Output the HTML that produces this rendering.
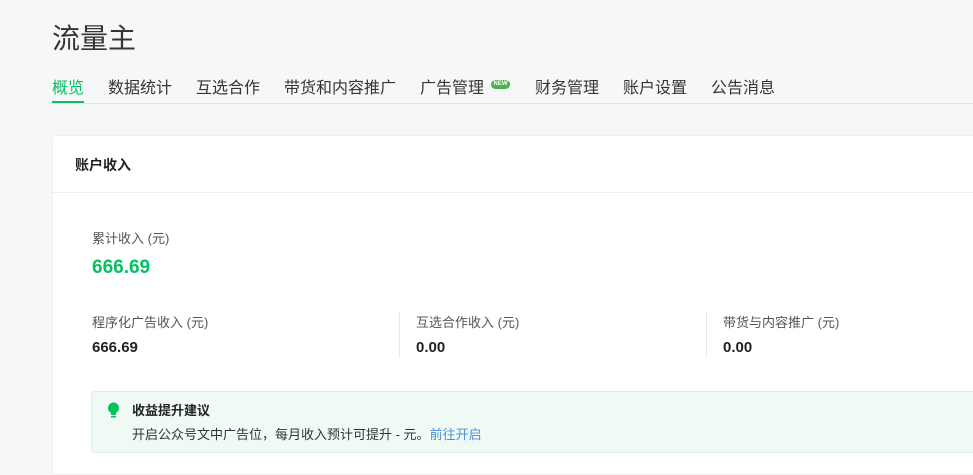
<!DOCTYPE html>
<html><head><meta charset="utf-8"><style>
*{margin:0;padding:0;box-sizing:border-box}
body{width:973px;height:463px;overflow:hidden;background:#f6f7f9;font-family:"Liberation Sans","Noto Sans CJK SC",sans-serif;color:#333;position:relative}
.a{position:absolute;white-space:nowrap}
h1{position:absolute;left:52px;top:17px;font-size:28px;font-weight:normal;color:#353535}
.tab{position:absolute;top:74px;font-size:16px;color:#353535}
.line{position:absolute;left:52px;right:0;top:103px;height:1px;background:#e2e3e5}
.card{position:absolute;left:52px;top:135px;width:930px;height:340px;background:#fff;border:1px solid #eceef0;border-radius:4px}
.lbl{font-size:13px;color:#555}
.val{font-size:15px;font-weight:bold;color:#222}
.div{position:absolute;top:312px;width:1px;height:46px;background:#e8e8e8}
.tip{position:absolute;left:91px;top:391px;width:900px;height:62px;background:#f0faf4;border:1px solid #d9f1e3;border-radius:4px}
</style></head><body>
<h1>流量主</h1>
<div class="tab" style="left:52px;color:#07c160">概览</div>
<div class="a" style="left:52px;top:101px;width:32px;height:3px;background:#07c160"></div>
<div class="tab" style="left:108px">数据统计</div>
<div class="tab" style="left:196px">互选合作</div>
<div class="tab" style="left:284px">带货和内容推广</div>
<div class="tab" style="left:420px">广告管理</div>
<div class="a" style="left:491px;top:80px;width:19px;height:9px;background:#4caf50;border-radius:5px;color:#fff;font-size:6px;line-height:9px;text-align:center;font-weight:bold">NEW</div>
<div class="tab" style="left:535px">财务管理</div>
<div class="tab" style="left:623px">账户设置</div>
<div class="tab" style="left:711px">公告消息</div>
<div class="line"></div>
<div class="card"></div>
<div class="a" style="left:75px;top:155px;font-size:14px;font-weight:bold;color:#222">账户收入</div>
<div class="a" style="left:53px;top:192px;width:920px;height:1px;background:#eceef0"></div>
<div class="a lbl" style="left:92px;top:228px">累计收入 (元)</div>
<div class="a" style="left:92px;top:257px;font-size:19px;font-weight:bold;color:#07c160">666.69</div>
<div class="a lbl" style="left:92px;top:312px">程序化广告收入 (元)</div>
<div class="a val" style="left:92px;top:339px">666.69</div>
<div class="div" style="left:399px"></div>
<div class="a lbl" style="left:416px;top:312px">互选合作收入 (元)</div>
<div class="a val" style="left:416px;top:339px">0.00</div>
<div class="div" style="left:706px"></div>
<div class="a lbl" style="left:723px;top:312px">带货与内容推广 (元)</div>
<div class="a val" style="left:723px;top:339px">0.00</div>
<div class="tip"></div>
<svg class="a" style="left:107px;top:402px" width="13" height="17" viewBox="0 0 13 17"><circle cx="6.5" cy="6" r="5.5" fill="#07c160"/><rect x="4" y="10" width="5" height="3" fill="#07c160"/><rect x="4" y="14" width="5" height="1.5" fill="#07c160"/></svg>
<div class="a" style="left:132px;top:400px;font-size:13px;font-weight:bold;color:#222">收益提升建议</div>
<div class="a" style="left:132px;top:424px;font-size:13px;color:#333">开启公众号文中广告位，每月收入预计可提升 - 元。<span style="color:#4a90e2">前往开启</span></div>
</body></html>
